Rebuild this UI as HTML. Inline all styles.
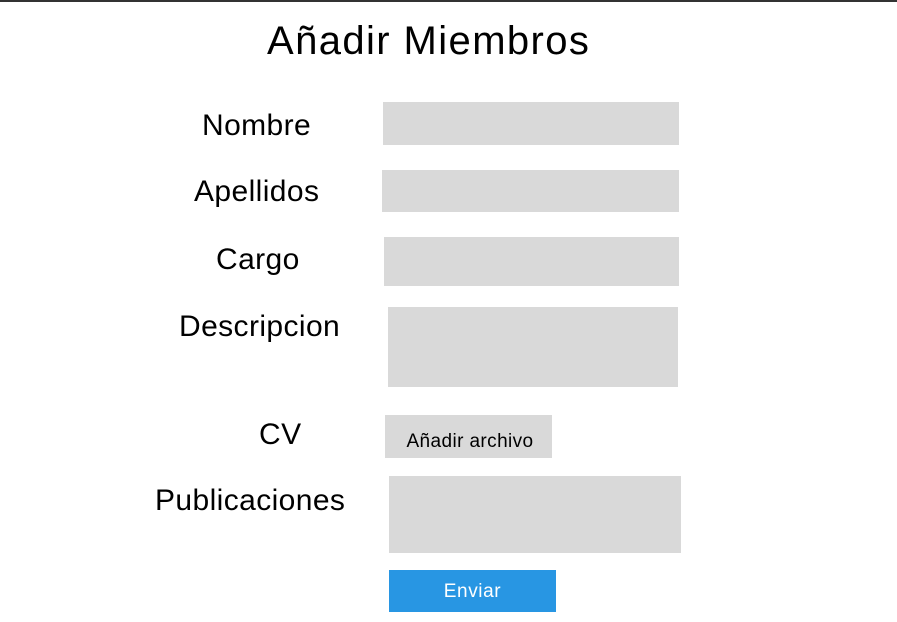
<!DOCTYPE html>
<html><head><meta charset="utf-8"><style>
html,body{margin:0;padding:0;background:#fff;}
body{width:897px;height:622px;position:relative;overflow:hidden;font-family:"Liberation Sans",sans-serif;color:#000;}
.top{position:absolute;left:0;top:0;width:897px;height:2px;background:#333;}
.t{position:absolute;line-height:1;white-space:nowrap;}
.l{font-size:30px;letter-spacing:0.4px;}
.b{position:absolute;background:#d9d9d9;}
</style></head><body>
<div class="top"></div>
<div class="t" style="left:267px;top:21px;font-size:40px;letter-spacing:1.4px;">Añadir Miembros</div>
<div class="t l" style="left:202px;top:111px;">Nombre</div>
<div class="t l" style="left:194px;top:177px;">Apellidos</div>
<div class="t l" style="left:216px;top:245px;">Cargo</div>
<div class="t l" style="left:179px;top:312px;">Descripcion</div>
<div class="t l" style="left:259px;top:420px;">CV</div>
<div class="t l" style="left:155px;top:486px;">Publicaciones</div>
<div class="b" style="left:383px;top:102px;width:296px;height:43px;"></div>
<div class="b" style="left:382px;top:170px;width:297px;height:42px;"></div>
<div class="b" style="left:384px;top:237px;width:295px;height:49px;"></div>
<div class="b" style="left:388px;top:307px;width:290px;height:80px;"></div>
<div class="b" style="left:385px;top:415px;width:167px;height:43px;"></div>
<div class="t" style="left:385px;top:432px;width:170px;text-align:center;font-size:19px;letter-spacing:0.4px;">Añadir archivo</div>
<div class="b" style="left:389px;top:476px;width:292px;height:77px;"></div>
<div class="b" style="left:389px;top:570px;width:167px;height:42px;background:#2896e3;"></div>
<div class="t" style="left:389px;top:582px;width:167px;text-align:center;font-size:19px;letter-spacing:0.6px;color:#fff;">Enviar</div>
</body></html>
